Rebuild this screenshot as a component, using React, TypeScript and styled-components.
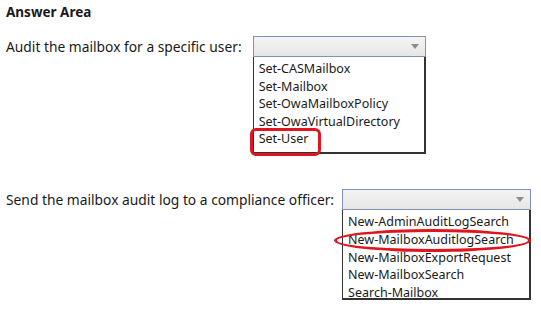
import styled, { createGlobalStyle } from "styled-components";

const GlobalStyle = createGlobalStyle`
    body {
        margin: 0;
        background: #ffffff;
        font-family: "Noto Sans", "Open Sans", sans-serif;
        color: #1a1a1a;
    }
`;

const Page = styled.main`
    width: 541px;
    height: 316px;
    padding: 2px 6px 0 6px;
    box-sizing: border-box;
    display: flex;
    flex-direction: column;
`;

const Title = styled.h1`
    margin: 0;
    font-size: 13.5px;
    font-weight: bold;
    line-height: 20px;
`;

const Question = styled.section<{ $gap: number; $top: number }>`
    display: flex;
    flex-direction: row;
    align-items: flex-start;
    gap: ${(p) => p.$gap}px;
    margin-top: ${(p) => p.$top}px;
`;

const Label = styled.span`
    font-size: 13.8px;
    line-height: 21px;
    white-space: nowrap;
`;

const Dropdown = styled.div<{ $width: number }>`
    width: ${(p) => p.$width}px;
    display: flex;
    flex-direction: column;
`;

const SelectBox = styled.div`
    height: 21px;
    box-sizing: border-box;
    border: 1px solid #7f93b6;
    background: linear-gradient(#f4f4f4, #e6e6e6);
    display: flex;
    justify-content: flex-end;
    align-items: center;
    padding-right: 6px;
`;

const Arrow = styled.span`
    width: 0;
    height: 0;
    border-left: 4px solid transparent;
    border-right: 4px solid transparent;
    border-top: 5px solid #8c8c8c;
`;

const List = styled.ul<{ $height: number }>`
    margin: 0;
    padding: 3px 0 0 0;
    list-style: none;
    height: ${(p) => p.$height}px;
    box-sizing: border-box;
    border: 1px solid #333;
    border-top: none;
    border-right-width: 2px;
    border-bottom-width: 2px;
    background: #fff;
`;

const Item = styled.li<{ $pitch: number }>`
    position: relative;
    font-size: 12.5px;
    line-height: ${(p) => p.$pitch}px;
    padding-left: 5px;
    white-space: nowrap;
`;

const BoxMark = styled.span`
    position: absolute;
    left: -4px;
    top: -2px;
    width: 71px;
    height: 28px;
    box-sizing: border-box;
    border: 3px solid #e0151f;
    border-radius: 6px;
`;

const OvalMark = styled.span`
    position: absolute;
    left: -9px;
    right: -2px;
    top: -2px;
    bottom: -3px;
    border: 3px solid #e0151f;
    border-radius: 50%;
`;

const auditOptions = [
    "Set-CASMailbox",
    "Set-Mailbox",
    "Set-OwaMailboxPolicy",
    "Set-OwaVirtualDirectory",
    "Set-User",
];

const logOptions = [
    "New-AdminAuditLogSearch",
    "New-MailboxAuditlogSearch",
    "New-MailboxExportRequest",
    "New-MailboxSearch",
    "Search-Mailbox",
];

function App() {
    return (
        <>
            <GlobalStyle />
            <Page>
                <Title>Answer Area</Title>
                <Question $gap={11} $top={14}>
                    <Label>Audit the mailbox for a specific user:</Label>
                    <Dropdown $width={173}>
                        <SelectBox>
                            <Arrow />
                        </SelectBox>
                        <List $height={97}>
                            {auditOptions.map((o) => (
                                <Item key={o} $pitch={17.5}>
                                    {o}
                                    {o === "Set-User" ? <BoxMark /> : null}
                                </Item>
                            ))}
                        </List>
                    </Dropdown>
                </Question>
                <Question $gap={8} $top={35}>
                    <Label>Send the mailbox audit log to a compliance officer:</Label>
                    <Dropdown $width={189}>
                        <SelectBox>
                            <Arrow />
                        </SelectBox>
                        <List $height={90}>
                            {logOptions.map((o) => (
                                <Item key={o} $pitch={17.8}>
                                    {o}
                                    {o === "New-MailboxAuditlogSearch" ? <OvalMark /> : null}
                                </Item>
                            ))}
                        </List>
                    </Dropdown>
                </Question>
            </Page>
        </>
    );
}

export default App;
